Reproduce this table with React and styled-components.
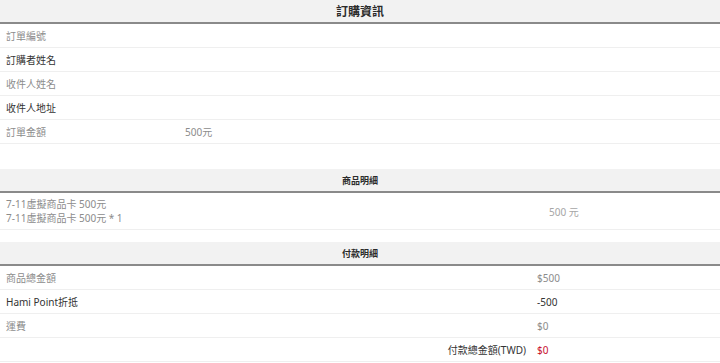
import React from 'react';
import styled, {createGlobalStyle} from 'styled-components';

const GlobalStyle = createGlobalStyle`
    body {
        margin: 0;
        background: #fff;
        font-family: "Noto Sans", "Noto Sans CJK TC", sans-serif;
        font-size: 10px;
        color: #333;
    }
`;

// CSS starts
const Page = styled.div`
    width: 720px;
`;

const Section = styled.section`
    margin-top: ${(props) => props.gap || 0}px;
`;

const Header = styled.div`
    height: 22px;
    display: flex;
    align-items: center;
    justify-content: center;
    background-color: #f2f2f2;
    border-bottom: 2px solid #8a8a8a;
    font-weight: bold;
    font-size: ${(props) => (props.big ? 12 : 9)}px;
    color: #2b2b2b;
`;

const Row = styled.div`
    display: grid;
    grid-template-columns: ${(props) => props.cols};
    align-items: center;
    min-height: 24px;
    border-bottom: 1px solid #efefef;
    padding: ${(props) => (props.tall ? '4px 0' : '0')};
    box-sizing: border-box;
`;

const Label = styled.div`
    padding-left: 6px;
    color: ${(props) => (props.dark ? '#333' : '#8c8c8c')};
    text-align: ${(props) => (props.right ? 'right' : 'left')};
    padding-right: ${(props) => (props.right ? '5px' : '0')};
    line-height: 14px;
`;

const Value = styled.div`
    padding-left: 6px;
    color: ${(props) => props.color || '#8c8c8c'};
`;
// CSS ends

const orderRows = [
    {label: '訂單編號'},
    {label: '訂購者姓名', dark: true},
    {label: '收件人姓名'},
    {label: '收件人地址', dark: true},
    {label: '訂單金額', value: '500元'},
];

const payRows = [
    {label: '商品總金額', value: '$500'},
    {label: 'Hami Point折抵', value: '-500', dark: true},
    {label: '運費', value: '$0'},
];

const App = () => (
    <Page>
        <GlobalStyle/>
        <Section>
            <Header big>訂購資訊</Header>
            {orderRows.map((r) => (
                <Row key={r.label} cols="179px 1fr">
                    <Label dark={r.dark}>{r.label}</Label>
                    <Value>{r.value}</Value>
                </Row>
            ))}
        </Section>
        <Section gap={25}>
            <Header>商品明細</Header>
            <Row cols="543px 1fr" tall>
                <Label>
                    7-11虛擬商品卡 500元<br/>
                    7-11虛擬商品卡 500元 * 1
                </Label>
                <Value color="#a6a6a6">500 元</Value>
            </Row>
        </Section>
        <Section gap={12}>
            <Header>付款明細</Header>
            {payRows.map((r) => (
                <Row key={r.label} cols="531px 1fr">
                    <Label dark={r.dark}>{r.label}</Label>
                    <Value color={r.dark ? '#333' : '#8c8c8c'}>{r.value}</Value>
                </Row>
            ))}
            <Row cols="531px 1fr">
                <Label dark right>付款總金額(TWD)</Label>
                <Value color="#c8102e">$0</Value>
            </Row>
        </Section>
    </Page>
);

export default App;
